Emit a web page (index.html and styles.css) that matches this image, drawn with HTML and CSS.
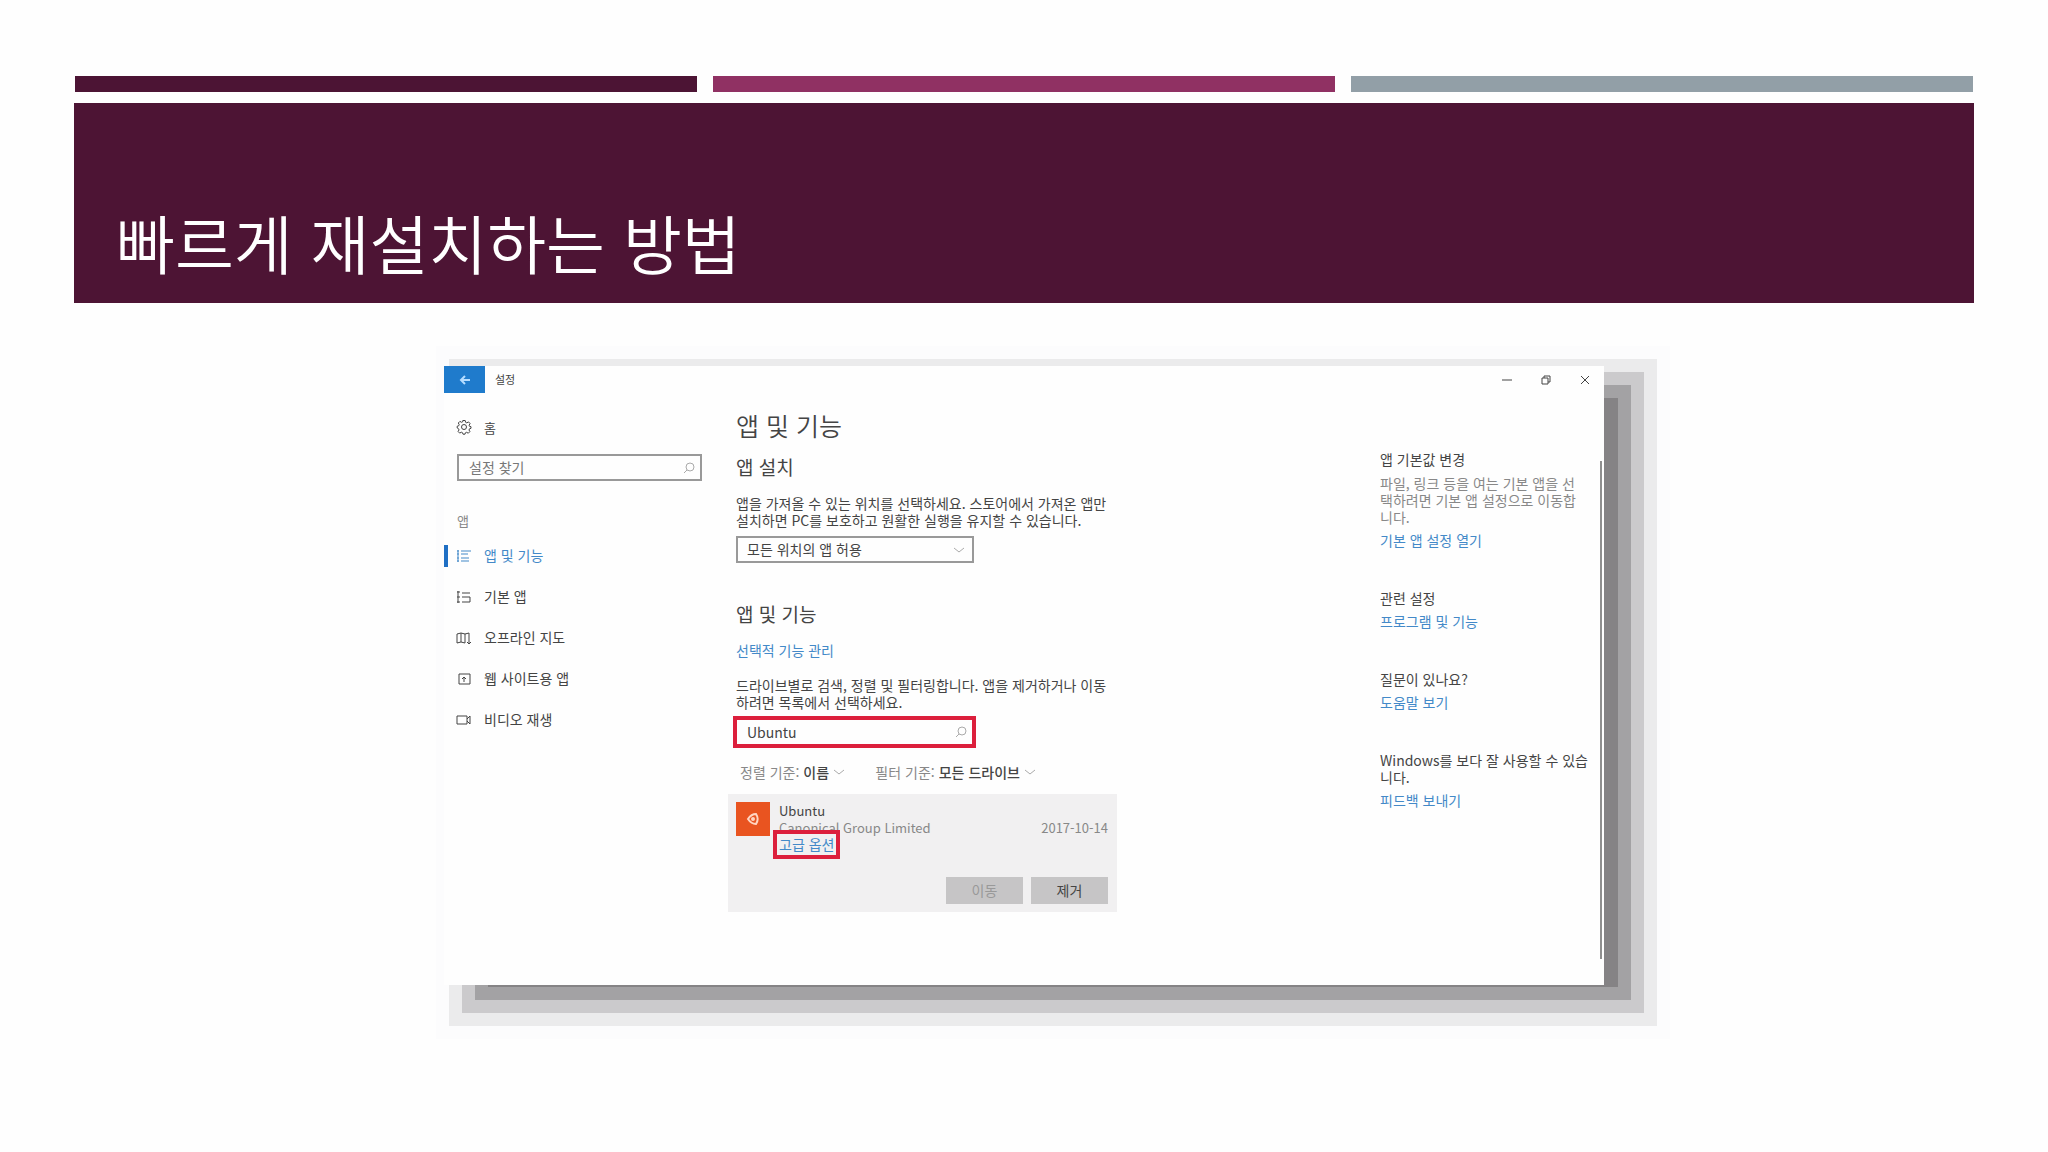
FILE: index.html
```html
<!DOCTYPE html>
<html lang="ko">

<head>
    <meta charset="UTF-8">
    <meta name="viewport" content="width=device-width, initial-scale=1.0">
    <title>빠르게 재설치하는 방법</title>
    <link rel="stylesheet" href="styles.css">
</head>

<body>
    <div class="stripes">
        <div class="stripe dark"></div>
        <div class="stripe pink"></div>
        <div class="stripe gray"></div>
    </div>

    <header class="banner">
        <h1>빠르게 재설치하는 방법</h1>
    </header>

    <!-- Settings window -->
    <div class="window">
        <div class="titlebar">
            <button type="button" class="back" aria-label="뒤로">
                <svg width="12" height="10" viewBox="0 0 12 10"><path d="M11 5H2M6 1L2 5l4 4" /></svg>
            </button>
            <span class="titletext">설정</span>
            <button type="button" class="winbtn" aria-label="최소화">
                <svg width="12" height="12" viewBox="0 0 12 12"><path d="M1 6h10" /></svg>
            </button>
            <button type="button" class="winbtn" aria-label="이전 크기로 복원">
                <svg width="12" height="12" viewBox="0 0 12 12"><path d="M2 4h6v6H2zM4 4V2h6v6H8" /></svg>
            </button>
            <button type="button" class="winbtn" aria-label="닫기">
                <svg width="12" height="12" viewBox="0 0 12 12"><path d="M2 2l8 8M10 2l-8 8" /></svg>
            </button>
        </div>

        <div class="content">
            <nav class="sidebar">
                <a href="#" class="home">
                    <svg width="16" height="16" viewBox="0 0 16 16"><path d="M6.8 1.5h2.4l.4 1.8 1.2.6 1.7-1 1.6 1.7-1 1.6.5 1.2 1.4.3v1.6l-1.5.5-.5 1.2.9 1.6-1.6 1.6-1.7-.9-1.2.5-.4 1.4H7l-.5-1.5-1.2-.5-1.6.9-1.6-1.6.9-1.6-.5-1.2L1.2 9V7.200l1.500-.4.5-1.200-.9-1.600 1.600-1.600 1.600.9 1.200-.500z" /><circle cx="8" cy="8" r="2.500" /></svg>
                    홈
                </a>
                <div class="searchbox">
                    <input type="text" placeholder="설정 찾기" aria-label="설정 찾기">
                    <svg width="12" height="12" viewBox="0 0 12 12"><circle cx="7" cy="5" r="4" /><path d="M4 8l-3 3" /></svg>
                </div>
                <p class="group">앱</p>
                <a href="#" class="item active">
                    <svg width="16" height="16" viewBox="0 0 16 16"><path d="M2 2v12M5 3h10M5 6h7M5 10h8M5 13h8M1 3h2M1 6h2M1 10h2M1 13h2" /></svg>
                    앱 및 기능
                </a>
                <a href="#" class="item">
                    <svg width="16" height="16" viewBox="0 0 16 16"><path d="M1 3h3M1 8h3M1 13h3M2 2v12M6 4h8M6 8h8v5H6" /></svg>
                    기본 앱
                </a>
                <a href="#" class="item">
                    <svg width="16" height="16" viewBox="0 0 16 16"><path d="M1 4l4-1 4 1 4-1v6M1 4v9l4-1 4 1M5 3v9M9 4v9M13 9v5M11 12l2 2 2-2" /></svg>
                    오프라인 지도
                </a>
                <a href="#" class="item">
                    <svg width="16" height="16" viewBox="0 0 16 16"><path d="M3 3h11v10H3zM8 6v5M6 8l2-2 2 2" /></svg>
                    웹 사이트용 앱
                </a>
                <a href="#" class="item">
                    <svg width="16" height="16" viewBox="0 0 16 16"><path d="M1 4h10v8H1zM11 7l3-3v8l-3-3" /></svg>
                    비디오 재생
                </a>
            </nav>

            <main class="main">
                <h2>앱 및 기능</h2>
                <h3>앱 설치</h3>
                <p class="text">앱을 가져올 수 있는 위치를 선택하세요. 스토어에서 가져온 앱만<br>설치하면 PC를 보호하고 원활한 실행을 유지할 수 있습니다.</p>
                <div class="selectbox">
                    <select aria-label="앱 설치 위치">
                        <option>모든 위치의 앱 허용</option>
                    </select>
                    <svg width="12" height="8" viewBox="0 0 12 8"><path d="M1 2l5 4 5-4" /></svg>
                </div>

                <h3 class="second">앱 및 기능</h3>
                <a href="#" class="manage">선택적 기능 관리</a>
                <p class="text">드라이브별로 검색, 정렬 및 필터링합니다. 앱을 제거하거나 이동<br>하려면 목록에서 선택하세요.</p>
                <div class="searchbox marked">
                    <input type="text" value="Ubuntu" aria-label="앱 검색">
                    <svg width="12" height="12" viewBox="0 0 12 12"><circle cx="7" cy="5" r="4" /><path d="M4 8l-3 3" /></svg>
                </div>

                <div class="filters">
                    <div class="filter">
                        <label for="sort">정렬 기준:</label>
                        <select id="sort">
                            <option>이름</option>
                        </select>
                        <svg width="12" height="8" viewBox="0 0 12 8"><path d="M1 2l5 4 5-4" /></svg>
                    </div>
                    <div class="filter">
                        <label for="drive">필터 기준:</label>
                        <select id="drive">
                            <option>모든 드라이브</option>
                        </select>
                        <svg width="12" height="8" viewBox="0 0 12 8"><path d="M1 2l5 4 5-4" /></svg>
                    </div>
                </div>

                <div class="card">
                    <div class="app">
                        <svg class="logo" width="34" height="34" viewBox="0 0 34 34">
                            <path d="M12 17c2-3 4-5 8-5 2 3 2 7 0 10-4 0-6-2-8-5z" />
                            <circle cx="17" cy="17" r="1" />
                        </svg>
                        <div class="appinfo">
                            <p class="appname">Ubuntu</p>
                            <p>Canonical Group Limited</p>
                            <a href="#" class="advanced">고급 옵션</a>
                        </div>
                        <span class="date">2017-10-14</span>
                    </div>
                    <div class="buttons">
                        <button type="button" disabled>이동</button>
                        <button type="button">제거</button>
                    </div>
                </div>
            </main>

            <aside class="related">
                <section>
                    <h4>앱 기본값 변경</h4>
                    <p>파일, 링크 등을 여는 기본 앱을 선<br>택하려면 기본 앱 설정으로 이동합<br>니다.</p>
                    <a href="#">기본 앱 설정 열기</a>
                </section>
                <section>
                    <h4>관련 설정</h4>
                    <a href="#">프로그램 및 기능</a>
                </section>
                <section>
                    <h4>질문이 있나요?</h4>
                    <a href="#">도움말 보기</a>
                </section>
                <section>
                    <h4>Windows를 보다 잘 사용할 수 있습<br>니다.</h4>
                    <a href="#">피드백 보내기</a>
                </section>
            </aside>
            <div class="scrollbar"></div>
        </div>
    </div>
</body>

</html>
```
FILE: styles.css
```css
* {
    box-sizing: border-box;
}

body {
    margin: 0;
    min-height: 100vh;
    padding: 76px 74px 80px;
    background-color: #fefefe;
    font-family: "Noto Sans CJK KR", sans-serif;
    font-size: 14px;
    line-height: 17px;
    color: #444;
}

h1, h2, h3, h4, p {
    margin: 0;
    font-weight: normal;
}

a {
    color: #4389c8;
    text-decoration: none;
}

svg {
    display: block;
    flex: none;
    fill: none;
    stroke: currentColor;
}

input, select, button {
    font: inherit;
    color: inherit;
    border: none;
    border-radius: 0;
    background: none;
    padding: 0;
}

select {
    appearance: none;
}

/* slide header */
.stripes {
    display: flex;
    gap: 16px;
    padding: 0 1px;
}

.stripe {
    flex: 1;
    height: 16px;
}

.dark {
    background-color: #4c1434;
}

.pink {
    background-color: #903163;
}

.gray {
    background-color: #929fa7;
}

.banner {
    display: flex;
    align-items: flex-end;
    height: 200px;
    margin-top: 11px;
    padding: 0 42px 20px;
    background-color: #4d1434;
    color: #fff;
}

h1 {
    font-size: 64px;
    font-weight: 350;
    line-height: 84px;
}

/* settings window, with a stepped shadow */
.window {
    max-width: 1160px;
    margin: 63px auto 0;
    padding-bottom: 73px;
    background-color: #fefefe;
    box-shadow:
        29px 17px 0 -15px #858385,
        29px 17px 0 -2px #a3a2a4,
        29px 17px 0 11px #cbcacc,
        29px 17px 0 24px #ebebec,
        29px 17px 0 37px #fcfcfd;
}

.titlebar {
    display: flex;
    align-items: center;
    height: 27px;
}

.back {
    display: flex;
    align-items: center;
    justify-content: center;
    width: 41px;
    height: 27px;
    background-color: #1f7bcc;
    color: #b5dcff;
}

.back svg {
    stroke-width: 2;
}

.titletext {
    flex: 1;
    padding-left: 10px;
    font-size: 11px;
}

.winbtn {
    display: flex;
    align-items: center;
    justify-content: center;
    width: 39px;
    height: 27px;
}

.content {
    display: grid;
    grid-template-columns: 284px 1fr 220px 4px;
}

/* left menu */
.sidebar {
    padding: 24px 26px 0 0;
}

.home {
    display: flex;
    align-items: center;
    gap: 12px;
    height: 20px;
    padding-left: 12px;
    font-size: 13px;
    color: #444;
}

.searchbox {
    display: flex;
    align-items: center;
    height: 27px;
    border: 2px solid #999;
    padding: 0 5px 0 10px;
    color: #aaa;
}

.searchbox input {
    flex: 1;
    min-width: 0;
    outline: none;
    color: #444;
}

.searchbox input::placeholder {
    color: #777;
    opacity: 1;
}

.sidebar .searchbox {
    margin: 17px 0 0 13px;
}

.group {
    margin-top: 30px;
    padding-left: 13px;
    font-size: 13px;
    line-height: 20px;
    color: #888;
}

.item {
    display: flex;
    align-items: center;
    gap: 12px;
    height: 41px;
    padding-left: 12px;
    color: #444;
}

.group + .item {
    margin-top: 4px;
}

.active {
    color: #4389c8;
    background: linear-gradient(#1f6fc4, #1f6fc4) left center / 4px 22px no-repeat;
}

/* middle column */
.main {
    max-width: 389px;
    padding-top: 14px;
}

h2, h3, .text, .manage {
    padding-left: 8px;
}

h2 {
    font-size: 25px;
    font-weight: 350;
    line-height: 36px;
}

h3 {
    margin-top: 12px;
    font-size: 19px;
    line-height: 24px;
}

.text {
    margin-top: 16px;
    white-space: nowrap;
}

.selectbox {
    display: flex;
    align-items: center;
    width: 238px;
    height: 27px;
    margin: 7px 0 0 8px;
    padding: 0 7px 0 9px;
    border: 2px solid #999;
}

.selectbox select {
    flex: 1;
}

.selectbox svg, .filter svg {
    color: #aaa;
}

.second {
    margin-top: 39px;
}

.manage {
    display: block;
    margin-top: 16px;
}

.manage + .text {
    margin-top: 18px;
}

.marked {
    width: 243px;
    height: 32px;
    margin: 5px 0 0 5px;
    border: 4px solid #dc1f3c;
}

.filters {
    display: flex;
    gap: 30px;
    margin-top: 15px;
    padding-left: 12px;
}

.filter {
    display: flex;
    align-items: center;
    gap: 4px;
    height: 18px;
    white-space: nowrap;
}

.filter label {
    color: #888;
}

.filter select {
    font-weight: 500;
}

.card {
    margin-top: 13px;
    padding: 8px 9px 8px 8px;
    background-color: #f1f0f1;
}

.app {
    display: flex;
    font-size: 13px;
    color: #888;
}

.logo {
    background-color: #e95420;
    color: #ffd5c2;
    stroke-width: 2;
}

.appinfo {
    flex: 1;
    padding-left: 9px;
}

.appname {
    color: #444;
}

.advanced {
    display: inline-block;
    font-size: 14px;
    outline: 4px solid #dc1f3c;
    outline-offset: 2px;
}

.date {
    align-self: center;
}

.buttons {
    display: flex;
    justify-content: flex-end;
    gap: 8px;
    margin-top: 24px;
}

.buttons button {
    width: 77px;
    height: 27px;
    background-color: #c6c5c6;
}

.buttons button:disabled {
    color: #999;
}

/* right column */
.related {
    display: flex;
    flex-direction: column;
    gap: 41px;
    padding-top: 58px;
    white-space: nowrap;
}

.related p {
    margin-top: 7px;
    color: #888;
}

.related a {
    display: block;
    margin-top: 5px;
    line-height: 18px;
}

.scrollbar {
    width: 2px;
    margin: 68px 0 -47px;
    background-color: #8f8f8f;
}
```
